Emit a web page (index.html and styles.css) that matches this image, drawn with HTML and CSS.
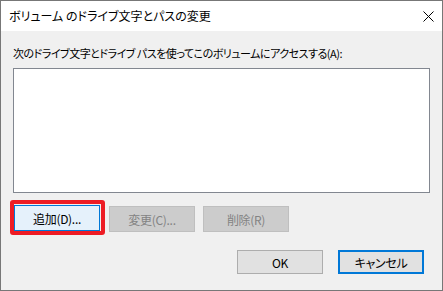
FILE: index.html
```html
<!DOCTYPE html>
<html lang="ja">
<head>
    <meta charset="UTF-8">
    <title>ボリューム のドライブ文字とパスの変更</title>
    <link rel="stylesheet" href="styles.css">
</head>
<body>

    <div class="window">
        <!-- Title bar -->
        <div class="titlebar">
            <span class="title">ボリューム のドライブ文字とパスの変更</span>
            <span class="close">
                <svg width="11" height="11" viewBox="0 0 11 11">
                    <path d="M0.5 0.5 L10.5 10.5 M10.5 0.5 L0.5 10.5" stroke="#000" stroke-width="1" fill="none"/>
                </svg>
            </span>
        </div>

        <!-- Dialog body -->
        <div class="content">
            <p class="label">次のドライブ文字とドライブ パスを使ってこのボリュームにアクセスする(A):</p>
            <div class="listbox"></div>

            <div class="button-row">
                <span class="highlight">
                    <button class="btn btn-focus">追加(D)...</button>
                </span>
                <button class="btn" disabled>変更(C)...</button>
                <button class="btn" disabled>削除(R)</button>
            </div>
        </div>

        <div class="footer">
            <button class="btn btn-dialog">OK</button>
            <button class="btn btn-dialog btn-default">キャンセル</button>
        </div>
    </div>

</body>
</html>
```

FILE: styles.css
```css
/* General */
* {
    margin: 0;
    padding: 0;
    box-sizing: border-box;
}

body {
    background-color: #f0f0f0;
    font-family: "Noto Sans CJK JP", "Noto Sans", sans-serif;
    font-size: 11px;
    font-feature-settings: "palt";
    color: #000;
}

/* Window */
.window {
    width: 443px;
    height: 291px;
    border: 1px solid #777777;
    background-color: #f0f0f0;
    display: flex;
    flex-direction: column;
}

.titlebar {
    height: 30px;
    background-color: #ffffff;
    display: flex;
    align-items: center;
    justify-content: space-between;
    padding-left: 8px;
}

.title {
    font-size: 12px;
    line-height: 16px;
}

.close {
    width: 28px;
    height: 30px;
    display: flex;
    align-items: center;
    justify-content: center;
}

/* Content */
.content {
    padding: 14px 12px 0 12px;
}

.label {
    line-height: 16px;
    letter-spacing: -0.5px;
    margin-bottom: 7px;
}

.listbox {
    height: 125px;
    background-color: #ffffff;
    border: 1px solid #828790;
}

.button-row {
    display: flex;
    align-items: flex-start;
    margin-top: 7px;
    margin-left: -3px;
}

.highlight {
    display: flex;
    border: 4px solid #ed1c24;
    border-radius: 3px;
    padding: 1px 1px 0 0;
    margin-right: 4px;
}

.btn {
    width: 86px;
    height: 26px;
    font-family: inherit;
    font-size: 12px;
    font-feature-settings: "palt";
    letter-spacing: -0.3px;
    background-color: #e1e1e1;
    border: 1px solid #adadad;
    color: #000;
}

.btn-focus {
    background-color: #e5f1fb;
    border-color: #0078d7;
}

.button-row > .btn {
    margin-top: 6px;
    margin-right: 8px;
}

.btn:disabled {
    background-color: #cccccc;
    border-color: #bfbfbf;
    color: #838383;
}

/* Footer */
.footer {
    display: flex;
    justify-content: flex-end;
    gap: 15px;
    margin-top: 15px;
    padding-right: 18px;
}

.btn-dialog {
    height: 24px;
}

.btn-default {
    border: 2px solid #0078d7;
}
```
